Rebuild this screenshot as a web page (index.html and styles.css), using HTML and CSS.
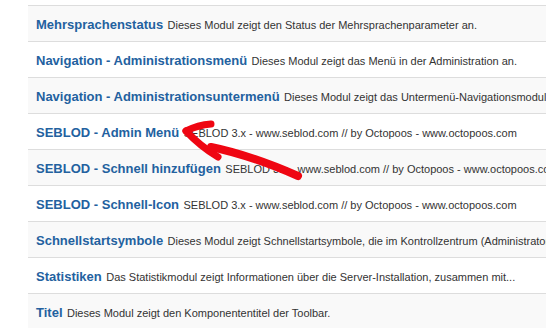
FILE: index.html
```html
<!DOCTYPE html>
<html lang="de">
<head>
<meta charset="utf-8">
<link rel="stylesheet" href="styles.css">
</head>
<body>
<div class="page">
  <table class="modules">
    <tbody>
      <tr><td><a class="title">Mehrsprachenstatus</a> <span class="desc">Dieses Modul zeigt den Status der Mehrsprachenparameter an.</span></td></tr>
      <tr><td><a class="title">Navigation - Administrationsmenü</a> <span class="desc">Dieses Modul zeigt das Menü in der Administration an.</span></td></tr>
      <tr><td><a class="title">Navigation - Administrationsuntermenü</a> <span class="desc">Dieses Modul zeigt das Untermenü-Navigationsmodul an.</span></td></tr>
      <tr><td><a class="title">SEBLOD - Admin Menü</a> <span class="desc">SEBLOD 3.x - www.seblod.com // by Octopoos - www.octopoos.com</span></td></tr>
      <tr><td><a class="title">SEBLOD - Schnell hinzufügen</a> <span class="desc">SEBLOD 3.x - www.seblod.com // by Octopoos - www.octopoos.com</span></td></tr>
      <tr><td><a class="title">SEBLOD - Schnell-Icon</a> <span class="desc">SEBLOD 3.x - www.seblod.com // by Octopoos - www.octopoos.com</span></td></tr>
      <tr><td><a class="title">Schnellstartsymbole</a> <span class="desc">Dieses Modul zeigt Schnellstartsymbole, die im Kontrollzentrum (Administrator) angezeigt werden.</span></td></tr>
      <tr><td><a class="title">Statistiken</a> <span class="desc">Das Statistikmodul zeigt Informationen über die Server-Installation, zusammen mit...</span></td></tr>
      <tr><td><a class="title">Titel</a> <span class="desc">Dieses Modul zeigt den Komponententitel der Toolbar.</span></td></tr>
    </tbody>
  </table>
  <svg class="arrow" width="546" height="328" viewBox="0 0 546 328">
    <g fill="none" stroke="#ef0612" stroke-linecap="round" stroke-linejoin="round">
      <path d="M186 131 Q198 125 211 124" stroke-width="7"/>
      <path d="M186 131 Q200 146 218 157" stroke-width="7"/>
      <path d="M211 147 Q250 155 298 176" stroke-width="8"/>
    </g>
  </svg>
</div>
</body>
</html>
```

FILE: styles.css
```css
html, body {
  margin: 0;
  padding: 0;
  background: #fff;
  overflow: hidden;
  width: 546px;
  height: 328px;
}

.page {
  position: relative;
  width: 546px;
  height: 328px;
  padding: 5px 0 0 28px;
  box-sizing: border-box;
  overflow: hidden;
}

.modules {
  border-collapse: collapse;
  width: 518px;
  table-layout: fixed;
  font-family: "Liberation Sans", Arial, sans-serif;
}

.modules td {
  height: 35px;
  padding: 0 0 0 8px;
  border-top: 1px solid #dddddd;
  white-space: nowrap;
  overflow: hidden;
  vertical-align: middle;
}

.modules tr:nth-child(odd) td {
  background: #f9f9f9;
}

.title {
  font-size: 13px;
  font-weight: bold;
  color: #23619f;
  text-decoration: none;
}

.desc {
  font-size: 11px;
  color: #333333;
}

.arrow {
  position: absolute;
  left: 0;
  top: 0;
  pointer-events: none;
}
```
